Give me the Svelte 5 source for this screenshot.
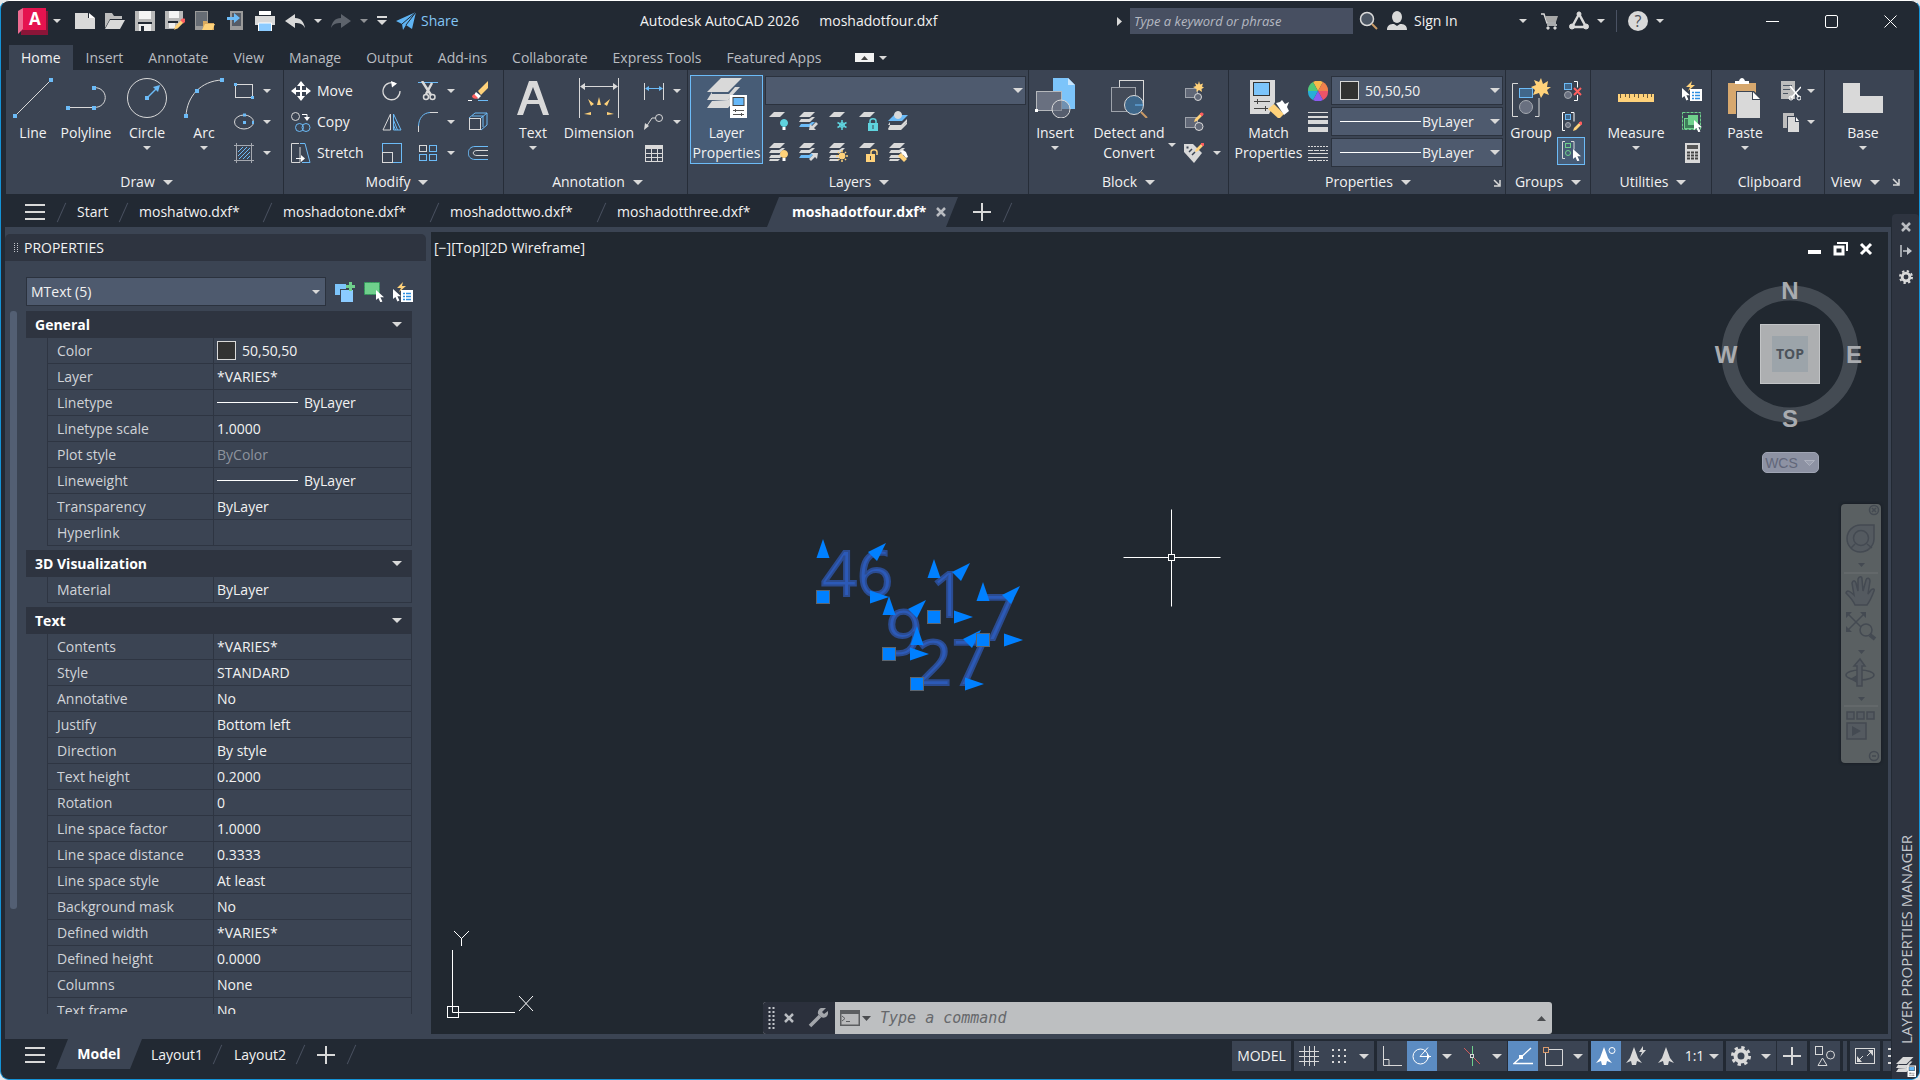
<script>
  const G = '#d9d9d9', B = '#6cbbf7', Y = '#ffd27a', R = '#ff5f5f', W = '#ffffff', D = '#3b4453', T = '#5fd3de', N = '#6fd08c';

  const line = (d, c = G, w = 1) => `<path d="${d}" fill="none" stroke="${c}" stroke-width="${w}"/>`;
  const fill = (d, c = G) => `<path d="${d}" fill="${c}"/>`;
  const box = (x, y, w, h, c) => `<rect x="${x}" y="${y}" width="${w}" height="${h}" fill="${c}"/>`;
  const frame = (x, y, w, h, c, f = 'none') => `<rect x="${x}" y="${y}" width="${w}" height="${h}" fill="${f}" stroke="${c}"/>`;
  const ring = (x, y, r, c, f = 'none', w = 1) => `<circle cx="${x}" cy="${y}" r="${r}" fill="${f}" stroke="${c}" stroke-width="${w}"/>`;
  const cursor = (x, y) => `<path transform="translate(${x} ${y})" d="M0 0v10l2.4-2 2 4.4 2-1-2-4.2H8z" fill="#fff"/>`;
  const pencil = (x, y) => `<g transform="translate(${x} ${y})"><path d="M0 9l1-3 5-5 2 2-5 5z" fill="${Y}"/><path d="M6 1l1-1h1.5l.7 1L8.500 2.500 8 3z" fill="${R}" stroke="${R}"/></g>`;
  const sheet = (y, c = G) => `<path d="M6 ${y}h11l-5 5H1z" fill="${c}"/>`;
  const stripes = (c = G) => sheet(1) + fill('M3 8l-2 3h11l5-5h-3l-3 2z') + fill('M3 13l-2 3h11l5-5h-3l-3 2z', c) + (c === G ? fill('M2 17l-1 2h9l2-2z') : '');

  const icons = {
    logo: [30, 27, fill('M3 3h27v24H3z', '#8b1538') + fill('M0 3l5-3v21l-5 5z', '#ee6c92') + fill('M5 0h23v22H5z', '#e5134f')],
    doc: [20, 20, fill('M0 2h13v5h7v11H0z') + fill('M14 2l6 5h-6z', W)],
    open: [20, 20, fill('M0 2h7l2 3h8v3H5L0 17z', '#bdbdbd') + fill('M5 9h15l-5 9H0z')],
    save: [20, 20, fill('M0 0h20v20H0z', '#b9b9b9') + box(4, 0, 12, 8, '#f4f4f4') + box(3, 11, 14, 2, '#222933') + box(4, 13, 12, 7, '#efefef') + box(6, 15, 3, 5, '#222933')],
    saveas: [20, 20, fill('M0 0h18v9l-9 9H0z', '#b9b9b9') + box(4, 0, 10, 7, '#f4f4f4') + box(3, 10, 10, 2, '#222933') + box(4, 12, 6, 5, '#efefef') + `<g transform="translate(9 8) scale(1.200)">${pencil(0, 0)}</g>`],
    webopen: [20, 20, fill('M0 0h13v19H0z', '#9a9a9a') + box(1, 1, 11, 14, '#666c74') + fill('M8 10h4l1 2h6v7H8z', '#d9a95f') + fill('M10 13h10l-3 6H7z', Y)],
    websave: [20, 20, fill('M5 0h13v19H5z', '#9a9a9a') + box(7, 2, 9, 13, '#565c66') + fill('M2 6h7V2l6 5-6 5V9H2z', B)],
    print: [20, 20, box(4, 0, 12, 4, W) + fill('M0 5h20v9H0z') + box(4, 12, 12, 8, '#8bcbff') + line('M3.500 20v-8h13v8', W)],
    undo: [20, 14, fill('M0 7l10-7v4c6 0 9 4 10 10-2-4-5-5-10-5v5z')],
    redo: [20, 14, fill('M20 7L10 0v4C4 4 1 8 0 14c2-4 5-5 10-5v5z', '#5d636c')],
    quick: [10, 10, box(0, 0, 10, 2, G) + fill('M0 4h10l-5 5z')],
    plane: [20, 18, fill('M0 9L20 0l-4 17-6-4-3 5-1-6z', '#5fb4f4') + line('M6 12L20 0 10 13', '#222933')],
    search: [20, 20, ring(8, 8, 6.5, G, '#4b5563', 1.5) + line('M13 13l5 5', '#c99a66', 2)],
    user: [20, 20, `<ellipse cx="10" cy="6" rx="5" ry="6" fill="${G}"/>` + fill('M0 19c0-5 3-6 7-6l3 2 3-2c4 0 7 1 7 6z')],
    cart: [17, 17, line('M0 1h3l3 9h9', G, 1.5) + fill('M4 3h13l-2 6H6z', '#a8a8a8') + line('M6 12h10', G, 1.5) + ring(7, 15, 1.2, G, G) + ring(14, 15, 1.2, G, G)],
    share3: [20, 20, line('M10 3L3 16h14z', G, 2.5) + ring(10, 3, 2, G, G) + ring(3, 15.5, 2.5, G, G) + ring(17, 15.5, 2.5, G, G)],
    min: [13, 13, line('M0 6.500h13', W)],
    max: [13, 13, `<rect x=".5" y=".5" width="12" height="12" rx="1.500" fill="none" stroke="${W}"/>`],
    close: [13, 13, line('M.5.500l12 12M12.500.500l-12 12', W)],
    line: [40, 40, line('M2 38L38 2') + box(0, 36, 4, 4, B) + box(36, 0, 4, 4, B)],
    polyline: [40, 40, line('M1 29.500h27c15 0 15-20 0-20') + box(0, 28, 4, 4, B) + box(26, 28, 4, 4, B) + box(26, 8, 4, 4, B)],
    circle: [40, 40, ring(20, 20, 19.5, G) + box(18, 18, 4, 4, B) + line('M20 20l10-10', B, 1.5) + fill('M33 7l-2 7-5-5z', B)],
    arc: [40, 40, line('M2 38C3 18 17 3 38 2') + box(0, 36, 4, 4, B) + box(11, 11, 4, 4, B) + box(36, 0, 4, 4, B)],
    rect: [20, 20, frame(1.5, 3.5, 17, 13, G) + box(0, 2, 3, 3, B) + box(17, 15, 3, 3, B)],
    ellipse: [20, 20, `<ellipse cx="10" cy="10" rx="9.500" ry="7" fill="none" stroke="${G}"/>` + box(9, 1.5, 3, 3, B) + box(9, 9, 3, 3, B) + box(18, 9, 2, 3, B)],
    hatch: [20, 20, line('M0 2.500h20M0 17.500h20M2.500 0v20M17.500 0v20', '#a5a9b0') + line('M4 9l5-5M4 13l9-9M5 16L16 5M9 16l7-7M13 16l3-3', B)],
    move: [20, 20, line('M10 2v16M2 10h16', W, 2) + fill('M10 0l4 5H6zM10 20l4-5H6zM0 10l5-4v8zM20 10l-5-4v8z', W)],
    copy: [20, 20, ring(4.5, 4.5, 4, G) + ring(8.5, 15.5, 4, B) + ring(15, 15.5, 4, B) + line('M11 2.500h5v3', W) + fill('M13 5h6l-3 4z', W)],
    stretch: [20, 20, line('M8 .5H.5v19H9V4', G) + line('M9 .5h5l5 19H11', B) + line('M5 15.500h6', W) + fill('M10 12l4 3.500-4 3.500z', W)],
    rotate: [20, 20, line('M14 3a8.500 8.500 0 1 0 4 7', G, 1.3) + fill('M9 0l6 2.500-5 4z', W)],
    mirror: [20, 20, line('M8.500 2v16H1z', G) + line('M11.500 2v16H19z', B) + line('M11.500 8l4 10M11.500 13l2 5', B)],
    scale: [20, 20, frame(.5, .5, 19, 19, B) + frame(.5, 9.5, 10, 10, G, D)],
    trim: [20, 20, line('M0 1.500h20', B) + line('M4 0l9 14M14 2l-6 11', G, 2.5) + ring(8, 16, 2.5, G, 'none', 1.5) + ring(14.5, 16, 2.5, G, 'none', 1.5)],
    fillet: [20, 20, line('M.5 20v-7', G) + line('M.5 14C1 6 5 1 12 .5', B) + line('M12 .5h8', G)],
    array: [20, 20, frame(1.5, 2.5, 7, 6, G) + frame(11.5, 2.5, 7, 6, B) + frame(1.5, 11.5, 7, 6, B) + frame(11.5, 11.5, 7, 6, B)],
    erase: [20, 20, fill('M10 10L20 0v7l-7 7z', Y) + fill('M8 11l5 4-3 3-4-4z', W) + fill('M6 13l4 4c-3 2-6 0-6-2z', R) + line('M0 19.500h4', W) + line('M10 19.500h10', B)],
    explode: [20, 20, line('M1 6l6-5h12v12l-6 5M13 6l6-5', B) + frame(1.5, 6.5, 11, 11, G) + line('M4 4h11v11', B)],
    offset: [20, 20, line('M20 3.500H7C-2 3.500-2 16.500 7 16.500h13', B) + line('M20 7.500H9c-5 0-5 5 0 5h11', G)],
    text: [32, 40, fill('M12 3h8l12 34h-6l-4-11H10L6 37H0zM16 9l-5 13h10z')],
    dim: [40, 40, line('M.5 0v40M39.500 0v40M3 8.500h34', G) + fill('M1 8.500l5-3.500v7zM39 8.500l-5-3.500v7z') + fill('M18 27h4l-2-8zM12 28l3-2-6-5zM28 28l-3-2 6-5zM12 34v3l-7-1zM28 34v3l7-1z', Y)],
    dimlin: [20, 20, line('M.5 2v17M19.500 2v17', G) + line('M3 7.500h14', B) + fill('M1 7.500l4-2.500v5zM19 7.500L15 5v5z', B)],
    leader: [20, 20, ring(15, 6, 3.5, G) + line('M11 6H8L2 15', G) + fill('M0 18l1-7 4 3z')],
    table: [20, 20, frame(1.5, 2.5, 17, 16, G) + box(1, 3, 18, 3, G) + line('M1 10.500h18M1 14.500h18M7.500 6v12M13.500 6v12')],
    layerprops: [40, 40, fill('M14 0h21L21 14H0z') + fill('M5 14L0 22h21l12-13h-5l-6 7H5z') + fill('M5 23l-5 7h21l9-10v-2h-6l-3 4z') + box(23, 17, 17, 23, W) + box(25.5, 19, 12, 9, '#444') + box(26.5, 20, 10, 7, '#66b8f8') + line('M26 32.500h11M26 36.500h11', '#555') + line('M28.500 31v3M34.500 35v3', '#555')],
    loff: [20, 20, sheet(1) + ring(16, 12, 3.5, T, T) + box(14.5, 16, 3, 3, W)],
    liso: [20, 20, stripes(B) + fill('M11 19l1-6 2 2 4-4 2 2-4 4 2 2z')],
    lfreeze: [20, 20, sheet(1) + line('M14 9v10M9.500 11.500l9 5M18.500 11.500l-9 5', T, 1.5) + ring(14, 14, 2.5, T)],
    llock: [20, 20, sheet(1) + line('M12 12v-2c0-3 6-3 6 0v2', T, 1.5) + box(10, 12, 10, 8, T) + box(14.5, 14, 1, 4, D)],
    lcur: [20, 20, fill('M6 4h14l-6 6H0z', B) + fill('M2 11l-2 3h13l6-6v3l-6 7H0l2-4z') + fill('M2 16l-2 3h13l6-6v-2l-6 6z') + ring(10, 4, 3.5, G, G)],
    lon: [20, 20, stripes() + ring(16, 12, 3.5, Y, Y) + box(14.5, 16, 3, 3, W)],
    luniso: [20, 20, stripes(B) + fill('M20 11l-1 6-2-2-4 4-2-2 4-4-2-2z')],
    lthaw: [20, 20, stripes() + ring(14, 14, 3, Y, Y) + line('M14 8v2M14 18v2M8 14h2M18 14h2M10 10l1 1M18 10l-1 1M10 18l1-1M18 18l-1-1', Y, 1.5)],
    lunlock: [20, 20, sheet(1) + line('M13 12v-2c0-3 6-3 6 0v3', Y, 1.5) + box(8, 12, 9, 8, Y) + box(12, 14, 1, 4, D)],
    lmatch: [20, 20, stripes() + fill('M10 14l3-3 6 6-3 3z', Y) + fill('M12 9l3-1 3 2 2 5-2 1z', W)],
    insert: [40, 40, fill('M18 0h15l7 7v24H18z', '#7cc4fa') + fill('M33 0v7h7z', '#c8e6fd') + frame(1.5, 13.5, 25, 19, '#b5b8bc', '#697080') + ring(26, 31, 9, G, '#69708099') + box(0, 31, 3, 3, W)],
    detect: [40, 40, frame(10.5, 2.5, 24, 24, G) + frame(2.5, 9.5, 24, 24, '#9ea3ab', '#444b58') + ring(25, 27, 9.5, G, '#3e678a') + line('M32 34l6 6', '#c99a66', 2) + line('M26 27h8', B)],
    binsert: [20, 20, frame(1.5, 7.5, 12, 9, '#9ea3ab', '#606776') + ring(14, 16, 3.5, G, '#606776') + `<path d="M15 0l1 3.500 3-1-1 3 2 1-2.500 1.500.500 3-3-2-2.500 2v-3L9 6l3-1-1-3 3 1.500z" fill="${Y}"/>`],
    bedit: [20, 20, frame(1.5, 5.5, 12, 10, '#9ea3ab', '#606776') + ring(15, 14.5, 4, G, '#606776') + pencil(10, 1)],
    battr: [20, 20, fill('M0 1h9l9 9-8 10L0 9z') + box(2.5, 3.5, 2, 2, D) + line('M5 9l3-3M8 12l3-3', D, 1.5) + pencil(11, 0)],
    match: [40, 40, fill('M1 2h25v22L20 36H1z') + frame(4.5, 4.5, 16, 13, '#333', '#7cc4fa') + line('M5 23.500h16M5 30.500h14M8.500 21v5M16.500 28v5', '#444') + fill('M19 31l6-5 10 10-5 5z', Y) + fill('M27 25l4-1 2-2 3 4 4-2-2 5 2 4-5 4z', W)],
    wheel: [20, 20, fill('M10 10L5 1a10 10 0 0 1 10 0z', '#f8b94b') + fill('M10 10l5-9a10 10 0 0 1 5 9z', '#f0814c') + fill('M10 10h10a10 10 0 0 1-5 9z', '#ed5468') + fill('M10 10l5 9a10 10 0 0 1-10 0z', '#8b5cf0') + fill('M10 10l-5 9a10 10 0 0 1-5-9z', '#27aed8') + fill('M10 10H0a10 10 0 0 1 5-9z', '#52c878')],
    weights: [20, 20, box(0, 0, 20, 1, G) + box(0, 4, 20, 2, G) + box(0, 8, 20, 4, G) + box(0, 15, 20, 5, G)],
    types: [20, 20, `<path d="M0 3.500h20" stroke="${G}" stroke-dasharray="2 1"/><path d="M0 7.500h20" stroke="${G}" stroke-dasharray="5 1"/><path d="M0 10.500h20M0 14.500h20" stroke="${G}"/><path d="M0 17.500h20" stroke="${G}" stroke-dasharray="5 1 2 1"/>`],
    group: [40, 40, line('M7 5.500H1.500v33H7M24 38.500h4V20', G) + frame(8.5, 10.5, 13, 9, B, '#41678a') + ring(15, 29, 6.5, '#a5a9b0', '#697080') + `<path d="M30 0l2 6 5-3-1 6h4l-4 3 2 5-5-2-3 5-2-5-6 2 2-5-4-3 5-2-2-5 5 2z" fill="${Y}"/>`],
    ungroup: [20, 20, frame(2.5, 2.5, 7, 6, B, '#41678a') + ring(6, 14, 3.5, '#a5a9b0', '#697080') + line('M12 .5h3.500v6M12 19.500h3.500V14', W) + line('M12 7l7 7M19 7l-7 7', R, 2)],
    gedit: [20, 20, line('M3 .5H.5v18H3M9 .5h3v9', W) + frame(3.5, 2.5, 5, 5, B, '#41678a') + ring(6, 13, 2.5, '#a5a9b0', '#697080') + pencil(11, 10)],
    gsel: [20, 20, line('M4 .5H1.500v17H4M10 .5h3v8', G) + frame(4.5, 2.5, 5, 4, N) + ring(7, 12, 2.5, N) + cursor(12, 8)],
    ruler: [40, 40, box(2, 16, 36, 8, Y) + line('M4.500 16v4M9.500 16v3M13.500 16v4M18.500 16v3M22.500 16v4M27.500 16v3M31.500 16v4M35.500 16v3', '#6b5a3a')],
    qselect: [20, 20, cursor(0, 7) + fill('M10 0L4 6h4L6 10l7-6H9z', Y) + box(8, 8, 12, 12, W) + line('M10 11.500h2M10 14.500h2M10 17.500h2M13 11.500h5M13 14.500h5M13 17.500h5', '#2f8fe0', 1.5)],
    selall: [20, 20, `<rect x=".5" y=".5" width="18" height="17" fill="none" stroke="${N}" stroke-dasharray="3 1"/>` + frame(2.5, 6.5, 10, 10, N, '#3c7d58') + box(6, 3, 10, 10, N) + cursor(12, 8)],
    calc: [20, 20, box(3, 0, 15, 20, G) + box(5, 2, 11, 4, '#555') + line('M5 9.500h3M9 9.500h3M13 9.500h3M5 12.500h3M9 12.500h3M13 12.500h3M5 15.500h3M9 15.500h3M13 15.500h3', '#444', 2)],
    paste: [34, 40, fill('M0 5h28v31H0z', '#d7a86e') + fill('M7 6V3h4c1-4 5-4 6 0h4v3z', W) + fill('M8 13h18l8 8v19H8z', D) + fill('M9 14h15v8h8v18H9z') + fill('M25 14l7 7h-7z', W)],
    cut: [20, 20, box(0, 0, 14, 18, '#bdbdbd') + line('M2 4.500h9M2 8.500h7M2 12.500h5', '#4b5563') + line('M9 5l9 11M20 6L10 17', W, 1.5) + ring(10, 17, 2, W) + ring(18, 17, 2, W)],
    copyclip: [20, 20, fill('M2 1h11v15H2z', '#bdbdbd') + fill('M6 4h9l5 5v12H6z', D) + fill('M7 5h7v5h4v10H7z') + fill('M15 5l3 4h-3z', W)],
    base: [40, 40, fill('M0 5h17v13h23v17H0z')],
    launch: [8, 8, line('M1 1l5 5M7 1v6H1', G, 1.5)],
    menu: [20, 18, box(0, 1, 20, 2, G) + box(0, 8, 20, 2, G) + box(0, 15, 20, 2, G)],
    plus: [18, 18, box(0, 8, 18, 2, G) + box(8, 0, 2, 18, G)],
    x: [10, 10, line('M1 1l8 8M9 1L1 9', '#b9bcc1', 2.5)],
    addsel: [20, 20, box(0, 2, 11, 11, '#7cc4fa') + box(5, 7, 13, 13, D) + box(6, 8, 12, 12, '#8bcbff') + box(14, 0, 3, 9, N) + box(11, 3, 9, 3, N)],
    pick: [20, 20, `<rect x=".5" y=".5" width="15" height="12" fill="${N}" stroke="#2d9d59" stroke-dasharray="2 1"/>` + cursor(12, 8)],
    pin: [12, 12, line('M1 0v12M3 6h6', '#c4c7cc', 1.5) + fill('M7 2l5 4-5 4z', '#c4c7cc')],
    gear: [20, 20, `<circle cx="10" cy="10" r="5.500" fill="none" stroke="${G}" stroke-width="4"/>` + `<circle cx="10" cy="10" r="8.500" fill="none" stroke="${G}" stroke-width="3" stroke-dasharray="3.300 3.380"/>`],
    grid: [20, 20, line('M5.500 0v20M10.500 0v20M15.500 0v20M0 5.500h20M0 10.500h20M0 15.500h20')],
    dots: [20, 20, [3, 9, 15].map((x) => [3, 9, 15].map((y) => box(x, y, 2, 2, G)).join('')).join('')],
    ortho: [20, 20, line('M1.500 0v19.500H20', G) + line('M2 13.500h5V19', G)],
    polar: [20, 20, ring(8.5, 10.5, 7.5, W) + line('M8 10.500h11M8 10.500l8-9', W) + fill('M15 7v7l3-3.500z', W)],
    iso: [20, 20, line('M2 2l16 16', '#d05a5a') + line('M10.500 0v20', N) + frame(8.5, 8.5, 3, 3, G, D)],
    otrack: [20, 20, line('M18 2L1 17.500h19', W, 1.3) + box(6, 9, 4, 4, W)],
    osnap: [20, 20, line('M6 3.500h13.500v16h-17V7', G) + frame(.5, 1.5, 5, 5, '#d99a6c')],
    ann1: [20, 20, fill('M8 1l4 11 4 5-5-2-1 4H6l-1-4-5 2 4-5z', W) + ring(16, 4.5, 3, W)],
    ann2: [20, 20, fill('M8 1l4 11 4 5-5-2-1 4H6l-1-4-5 2 4-5z') + fill('M17 0l-4 6h3l-2 5 6-7h-3z')],
    ann3: [20, 20, fill('M10 1l4 11 4 5-5-2-1 4H8l-1-4-5 2 4-5z')],
    shapes: [20, 20, frame(.5, .5, 7, 8, G) + ring(15.5, 9, 4, G) + line('M7.500 12L12 19.500H3z')],
    full: [20, 20, frame(.5, 2.5, 19, 15, G) + line('M3 15l5-5M12 10l5-5') + fill('M2 10v6h5zM18 10V4h-5z')],
    ctlmin: [16, 14, box(1, 8, 13, 4, W)],
    ctlres: [16, 14, line('M4 1h10v8', W, 2) + line('M2 5h8v7H2z', W, 3)],
    ctlx: [14, 14, line('M2 2l10 10M12 2L2 12', W, 3)],
    wrench: [20, 20, line('M2 18l10-10', '#a3a6ab', 3.5) + fill('M18 0l-4 4 2 2 4-3c1 5-3 8-7 6l-3-3c-1-4 3-8 8-6z', '#a3a6ab')],
    term: [20, 16, box(0, 0, 20, 16, '#5c5e61') + box(1.5, 4, 17, 10.5, '#b9babc') + line('M2 6l3 2.500-3 2.500M6 11.500h4', '#5c5e61')],
  };

  const tabs = ['Home', 'Insert', 'Annotate', 'View', 'Manage', 'Output', 'Add-ins', 'Collaborate', 'Express Tools', 'Featured Apps'];
  const docs = [['Start', 'start'], ['moshatwo.dxf*', 'short'], ['moshadotone.dxf*', ''], ['moshadottwo.dxf*', ''], ['moshadotthree.dxf*', 'last']];
  const layerTools = ['loff', 'liso', 'lfreeze', 'llock', 'lcur', 'lon', 'luniso', 'lthaw', 'lunlock', 'lmatch'];

  const sections = [
    { title: 'General', rows: [
      ['Color', '50,50,50', 'swatch'], ['Layer', '*VARIES*'], ['Linetype', 'ByLayer', 'rule'], ['Linetype scale', '1.0000'],
      ['Plot style', 'ByColor', 'dim'], ['Lineweight', 'ByLayer', 'rule'], ['Transparency', 'ByLayer'], ['Hyperlink', '']] },
    { title: '3D Visualization', rows: [['Material', 'ByLayer']] },
    { title: 'Text', rows: [
      ['Contents', '*VARIES*'], ['Style', 'STANDARD'], ['Annotative', 'No'], ['Justify', 'Bottom left'], ['Direction', 'By style'],
      ['Text height', '0.2000'], ['Rotation', '0'], ['Line space factor', '1.0000'], ['Line space distance', '0.3333'],
      ['Line space style', 'At least'], ['Background mask', 'No'], ['Defined width', '*VARIES*'], ['Defined height', '0.0000'],
      ['Columns', 'None'], ['Text frame', 'No']] },
  ];

  // Text objects on the canvas: grip origin, end of the width grip, string, string offset.
  const objects = [
    { x: 392, y: 365, w: 47, s: '46', dx: -2, dy: -1 },
    { x: 503, y: 385, w: 20, s: '1', dx: -4, dy: 0 },
    { x: 458, y: 422, w: 21, s: '9', dx: -3, dy: 1 },
    { x: 486, y: 452, w: 48, s: '27', dx: -1, dy: 1 },
    { x: 552, y: 408, w: 21, s: '7', dx: -3, dy: 0 },
  ];
</script>

{#snippet ic(name)}
  <svg class="ic" width={icons[name][0]} height={icons[name][1]} viewBox="0 0 {icons[name][0]} {icons[name][1]}" aria-hidden="true">{@html icons[name][2]}</svg>
{/snippet}

{#snippet caret()}
  <svg class="ic" width="8" height="4" viewBox="0 0 8 4" aria-hidden="true"><path d="M0 0h8L4 4z" fill="#d9d9d9" /></svg>
{/snippet}

{#snippet wide()}
  <svg class="ic" width="10" height="5" viewBox="0 0 10 5" aria-hidden="true"><path d="M0 0h10L5 5z" fill="#d9d9d9" /></svg>
{/snippet}

{#snippet tool(name, label, more)}
  <div class="tool">
    <button aria-label={label}>{@render ic(name)}</button>
    {#if more}<button aria-label="{label} options">{@render caret()}</button>{/if}
  </div>
{/snippet}

{#snippet big(name, lines, more, cls)}
  <button class="big {cls}">
    {@render ic(name)}
    <span class="lbl">{#each lines as l}<span>{l}</span>{/each}</span>
    {#if more}{@render caret()}{/if}
  </button>
{/snippet}

{#snippet foot(label, more)}
  <button class="foot">{label}{#if more}{@render wide()}{/if}</button>
{/snippet}

<div class="app">
  <header class="title">
    <div class="quick">
      <button class="logo" aria-label="Application menu">{@render ic('logo')}<b>A</b></button>
      <button aria-label="Application options">{@render caret()}</button>
      <button class="new" aria-label="New">{@render ic('doc')}</button>
      <button aria-label="Open">{@render ic('open')}</button>
      <button aria-label="Save">{@render ic('save')}</button>
      <button aria-label="Save as">{@render ic('saveas')}</button>
      <button aria-label="Open from web">{@render ic('webopen')}</button>
      <button aria-label="Save to web">{@render ic('websave')}</button>
      <button aria-label="Plot">{@render ic('print')}</button>
      <button aria-label="Undo">{@render ic('undo')}</button>
      <button aria-label="Undo history">{@render caret()}</button>
      <button aria-label="Redo">{@render ic('redo')}</button>
      <button class="faint" aria-label="Redo history">{@render caret()}</button>
      <button aria-label="Customize">{@render ic('quick')}</button>
      <button class="share">{@render ic('plane')}Share</button>
    </div>
    <div class="name"><span>Autodesk AutoCAD 2026</span><span>moshadotfour.dxf</span></div>
    <div class="account">
      <svg width="5" height="9" viewBox="0 0 5 9" aria-hidden="true"><path d="M0 0l5 4.500L0 9z" fill="#d9d9d9" /></svg>
      <input type="search" aria-label="Search" placeholder="Type a keyword or phrase" />
      <button aria-label="Search">{@render ic('search')}</button>
      <button class="sign">{@render ic('user')}Sign In</button>
      <button aria-label="Account options">{@render caret()}</button>
      <button class="cart" aria-label="App store">{@render ic('cart')}</button>
      <button aria-label="Autodesk apps">{@render ic('share3')}</button>
      <button aria-label="App options">{@render caret()}</button>
      <i class="bar"></i>
      <button class="help" aria-label="Help">?</button>
      <button aria-label="Help options">{@render caret()}</button>
    </div>
    <div class="winctl">
      <button aria-label="Minimize">{@render ic('min')}</button>
      <button aria-label="Maximize">{@render ic('max')}</button>
      <button aria-label="Close">{@render ic('close')}</button>
    </div>
  </header>

  <nav class="tabs">
    {#each tabs as t, i}<button class:on={i === 0}>{t}</button>{/each}
    <button class="collapse" aria-label="Minimize ribbon"><svg width="19" height="9" viewBox="0 0 19 9" aria-hidden="true"><path d="M0 0h19v9H0z" fill="#f2f2f2" /><path d="M6 7h7L9.500 3z" fill="#444" /></svg></button>
    <button class="after" aria-label="Ribbon options">{@render caret()}</button>
  </nav>

  <section class="ribbon">
    <div class="panel draw">
      <div class="body">
        {@render big('line', ['Line'], false, 'w46')}
        {@render big('polyline', ['Polyline'], false, 'w60')}
        {@render big('circle', ['Circle'], true, 'w62')}
        {@render big('arc', ['Arc'], true, 'w52')}
        <div class="col">
          {@render tool('rect', 'Rectangle', true)}
          {@render tool('ellipse', 'Ellipse', true)}
          {@render tool('hatch', 'Hatch', true)}
        </div>
      </div>
      {@render foot('Draw', true)}
    </div>

    <div class="panel modify">
      <div class="body">
        <div class="col named">
          <button>{@render ic('move')}Move</button>
          <button>{@render ic('copy')}Copy</button>
          <button>{@render ic('stretch')}Stretch</button>
        </div>
        <div class="col">
          {@render tool('rotate', 'Rotate')}
          {@render tool('mirror', 'Mirror')}
          {@render tool('scale', 'Scale')}
        </div>
        <div class="col">
          {@render tool('trim', 'Trim', true)}
          {@render tool('fillet', 'Fillet', true)}
          {@render tool('array', 'Array', true)}
        </div>
        <div class="col">
          {@render tool('erase', 'Erase')}
          {@render tool('explode', 'Explode')}
          {@render tool('offset', 'Offset')}
        </div>
      </div>
      {@render foot('Modify', true)}
    </div>

    <div class="panel annotation">
      <div class="body">
        {@render big('text', ['Text'], true, 'w50')}
        {@render big('dim', ['Dimension'], false, 'w82')}
        <div class="col">
          {@render tool('dimlin', 'Linear', true)}
          {@render tool('leader', 'Leader', true)}
          {@render tool('table', 'Table')}
        </div>
      </div>
      {@render foot('Annotation', true)}
    </div>

    <div class="panel layers">
      <div class="body">
        {@render big('layerprops', ['Layer', 'Properties'], false, 'active')}
        <div class="stack">
          <div class="combo">
            <select aria-label="Layer"><option></option></select>{@render wide()}
          </div>
          <div class="lgrid">
            {#each layerTools as t}<button aria-label={t}>{@render ic(t)}</button>{/each}
          </div>
        </div>
      </div>
      {@render foot('Layers', true)}
    </div>

    <div class="panel block">
      <div class="body">
        {@render big('insert', ['Insert'], true, 'w52')}
        {@render big('detect', ['Detect and', 'Convert'], true, 'w96 aside')}
        <div class="col">
          {@render tool('binsert', 'Create block')}
          {@render tool('bedit', 'Edit block')}
          {@render tool('battr', 'Edit attributes', true)}
        </div>
      </div>
      {@render foot('Block', true)}
    </div>

    <div class="panel props">
      <div class="body">
        {@render big('match', ['Match', 'Properties'], false, 'w76')}
        <div class="stack">
          <div class="row">{@render ic('wheel')}
            <div class="combo"><i class="sw"></i><select class="c1" aria-label="Object color"><option>50,50,50</option></select>{@render wide()}</div>
          </div>
          <div class="row">{@render ic('weights')}
            <div class="combo"><i class="ln"></i><select class="c2" aria-label="Lineweight"><option>ByLayer</option></select>{@render wide()}</div>
          </div>
          <div class="row">{@render ic('types')}
            <div class="combo"><i class="ln"></i><select class="c2" aria-label="Linetype"><option>ByLayer</option></select>{@render wide()}</div>
          </div>
        </div>
      </div>
      {@render foot('Properties', true)}
      <button class="launch" aria-label="Properties dialog">{@render ic('launch')}</button>
    </div>

    <div class="panel groups">
      <div class="body">
        {@render big('group', ['Group'], false, 'w50')}
        <div class="col tight">
          {@render tool('ungroup', 'Ungroup')}
          {@render tool('gedit', 'Group edit')}
          <div class="tool lit">{@render tool('gsel', 'Group selection')}</div>
        </div>
      </div>
      {@render foot('Groups', true)}
    </div>

    <div class="panel util">
      <div class="body">
        {@render big('ruler', ['Measure'], true, 'w82')}
        <div class="col">
          {@render tool('qselect', 'Quick select')}
          {@render tool('selall', 'Select all')}
          {@render tool('calc', 'Calculator')}
        </div>
      </div>
      {@render foot('Utilities', true)}
    </div>

    <div class="panel clip">
      <div class="body">
        {@render big('paste', ['Paste'], true, 'w60')}
        <div class="col">
          {@render tool('cut', 'Cut', true)}
          {@render tool('copyclip', 'Copy clip', true)}
        </div>
      </div>
      {@render foot('Clipboard', false)}
    </div>

    <div class="panel view">
      <div class="body">
        {@render big('base', ['Base'], true, 'w76')}
      </div>
      <div class="feet">
        {@render foot('View', true)}
        <button aria-label="View dialog">{@render ic('launch')}</button>
      </div>
    </div>
  </section>

  <div class="lower">
    <div class="left">
      <nav class="docs">
        <button class="burger" aria-label="Document menu">{@render ic('menu')}</button>
        {#each docs as [name, cls]}<button class="doc {cls}"><i class="slash"></i>{name}</button>{/each}
        <div class="doc current"><button>moshadotfour.dxf*</button><button aria-label="Close tab">{@render ic('x')}</button></div>
        <button class="add" aria-label="New tab">{@render ic('plus')}</button>
        <i class="slash"></i>
      </nav>

      <div class="work">
        <aside class="palette">
          <h2><svg width="4" height="10" viewBox="0 0 4 10" aria-hidden="true"><path d="M.5 0v10M3.500 0v10" stroke="#c4c7cc" stroke-dasharray="1 1" /></svg>PROPERTIES</h2>
          <div class="picker">
            <div class="combo"><select aria-label="Selection"><option>MText (5)</option></select>{@render caret()}</div>
            <button aria-label="Toggle pickadd">{@render ic('addsel')}</button>
            <button aria-label="Select objects">{@render ic('pick')}</button>
            <button aria-label="Quick select">{@render ic('qselect')}</button>
          </div>
          <div class="scroller">
            <div class="thumb"></div>
            <div class="sections">
              {#each sections as s}
                <section>
                  <h3>{s.title}{@render wide()}</h3>
                  <table>
                    <tbody>
                      {#each s.rows as [k, v, kind]}
                        <tr>
                          <th scope="row">{k}</th>
                          <td><div class="val" class:dim={kind === 'dim'}>{#if kind === 'swatch'}<i class="sw"></i>{/if}{#if kind === 'rule'}<i class="ln"></i>{/if}{v}</div></td>
                        </tr>
                      {/each}
                    </tbody>
                  </table>
                </section>
              {/each}
            </div>
          </div>
        </aside>

        <main class="canvas">
          <svg class="drawing" aria-hidden="true">
            {#each objects as o}
              <text class="digits" x={o.x + o.dx} y={o.y + o.dy}>{o.s}</text>
            {/each}
            {#each objects as o}
              <g transform="translate({o.x} {o.y})" fill="#0080ff">
                <rect x="-6.500" y="-6.500" width="13" height="13" stroke="#5d6670" />
                <path d="M0-58l6.500 19h-13z" />
                <path d="M{o.w}-6.500l19 6.500-19 6.500z" />
                <path d="M{o.w + 16}-54l-18 9 9 9z" />
              </g>
            {/each}
            <path d="M692.500 325.500h97M740.500 277.500v97" stroke="#fff" />
            <rect x="737.500" y="322.500" width="6" height="6" fill="#212830" stroke="#fff" />
            <g fill="none" stroke="#fff">
              <path d="M21.500 718v62.500H84" />
              <rect x="16.500" y="774.500" width="11" height="11" />
              <path d="M23 699l7.500 7.500L38 699M30.500 706v8M88 764l14 15M102 764l-14 15" />
            </g>
          </svg>
          <div class="viewlabel">[−][Top][2D Wireframe]</div>
          <div class="viewctl">
            <button aria-label="Minimize view">{@render ic('ctlmin')}</button>
            <button aria-label="Restore view">{@render ic('ctlres')}</button>
            <button aria-label="Close view">{@render ic('ctlx')}</button>
          </div>
          <div class="cube">
            <svg width="150" height="150" viewBox="0 0 150 150" aria-hidden="true">
              <circle cx="75" cy="75" r="61" fill="none" stroke="#444b53" stroke-width="15" />
              <rect x="45.500" y="45.500" width="59" height="59" fill="#adafb1" stroke="#c2c4c6" />
              <rect x="57" y="57" width="36" height="36" fill="#9ca4aa" />
              <g class="compass" text-anchor="middle">
                <text x="75" y="20">N</text><text x="75" y="148">S</text><text x="11" y="84">W</text><text x="139" y="84">E</text>
              </g>
              <text class="top" x="75" y="80" text-anchor="middle">TOP</text>
            </svg>
            <button class="wcs">WCS<svg width="11" height="6" viewBox="0 0 11 6" aria-hidden="true"><path d="M.5.500h10L5.500 5.500z" fill="#999eae" stroke="#adb1be" /></svg></button>
          </div>
          <div class="navbar">
            <svg width="40" height="259" viewBox="0 0 40 259" aria-hidden="true">
              <g fill="none" stroke="#444a52" stroke-width="1.500">
                <circle cx="33" cy="6" r="4.500" /><path d="M31 4l4 4M35 4l-4 4" />
                <path d="M20 21h13v14a13.500 13.500 0 1 1-13-14z" fill="#545a60" /><circle cx="20" cy="34" r="7.500" /><path d="M14 40l-4 4M26 40l5 4" />
                <path d="M3 69h34M3 202h34" stroke="#6c7173" stroke-width="1" />
                <path d="M14 101c-2-5-6-9-9-12 1-4 5-1 8 2l-2-12c1-3 3-3 4 0l2 8V75c1-3 4-3 4 0l1 12 3-11c1-3 4-2 4 1l-2 13 3-4c2-2 4-1 3 1-3 8-4 10-7 14z" fill="#545a60" />
                <path d="M7 110l16 16M23 110L7 126" /><circle cx="25" cy="126" r="6" fill="#5a6062" /><path d="M29 131l5 4" stroke-width="4" />
                <ellipse cx="19" cy="171" rx="14" ry="5" /><path d="M19 155l5 7h-3v20h-5v-20h-3z" fill="#545a60" />
                <path d="M6 208h7v7H6zM16 208h7v7h-7zM26 208h7v7h-7zM6 219h19v16H6z" fill="#545a60" />
                <circle cx="33" cy="252" r="4.500" /><path d="M31 252h4" />
              </g>
              <path d="M17 59h7l-3.500 4zM17 146h7l-3.500 4zM17 193h7l-3.500 4zM11 222v10l9-5zM5 108h6l-6 6zM25 108h-6l6 6zM5 128h6l-6-6zM9 175l7-4v8z" fill="#444a52" />
            </svg>
          </div>
          <div class="command">
            <div class="grab">
              <svg width="8" height="22" viewBox="0 0 8 22" aria-hidden="true"><path d="M1.500 0v22M5.500 0v22" stroke="#c4c7cc" stroke-width="2" stroke-dasharray="2 2" /></svg>
              <button aria-label="Close command line">{@render ic('x')}</button>
              <button aria-label="Customize command line">{@render ic('wrench')}</button>
            </div>
            <button class="recent" aria-label="Recent commands">{@render ic('term')}<svg width="9" height="5" viewBox="0 0 9 5" aria-hidden="true"><path d="M0 0h9L4.500 5z" fill="#4b4d50" /></svg></button>
            <input aria-label="Command" placeholder="Type a command" />
            <button class="history" aria-label="Command history"><svg width="9" height="5" viewBox="0 0 9 5" aria-hidden="true"><path d="M0 5h9L4.500 0z" fill="#4b4d50" /></svg></button>
          </div>
        </main>
      </div>

      <footer class="status">
        <button class="burger" aria-label="Layout menu">{@render ic('menu')}</button>
        <button class="model">Model</button>
        <button class="layout">Layout1</button><i class="slash"></i>
        <button class="layout two">Layout2</button><i class="slash"></i>
        <button class="add" aria-label="New layout">{@render ic('plus')}</button><i class="slash"></i>
        <div class="cells">
          <div class="cell"><button class="mode">MODEL</button></div>
          <div class="cell"><button aria-label="Grid">{@render ic('grid')}</button><button aria-label="Snap">{@render ic('dots')}</button><button class="c" aria-label="Snap options">{@render wide()}</button></div>
          <div class="cell"><button aria-label="Ortho">{@render ic('ortho')}</button><button class="on" aria-label="Polar">{@render ic('polar')}</button><button class="c" aria-label="Polar options">{@render wide()}</button><button aria-label="Isodraft">{@render ic('iso')}</button><button class="c edge" aria-label="Isodraft options">{@render wide()}</button><button class="on" aria-label="Object tracking">{@render ic('otrack')}</button><button aria-label="Object snap">{@render ic('osnap')}</button><button class="c" aria-label="Object snap options">{@render wide()}</button></div>
          <div class="cell"><button class="on" aria-label="Annotation visibility">{@render ic('ann1')}</button><button aria-label="Auto scale">{@render ic('ann2')}</button><button aria-label="Annotation scale">{@render ic('ann3')}</button><button class="ratio">1:1{@render wide()}</button></div>
          <div class="cell"><button aria-label="Workspace">{@render ic('gear')}</button><button class="c edge" aria-label="Workspace options">{@render wide()}</button><button aria-label="Monitor">{@render ic('plus')}</button></div>
          <div class="cell"><button aria-label="Isolate">{@render ic('shapes')}</button></div>
          <div class="cell sliver"></div>
          <div class="cell"><button aria-label="Clean screen">{@render ic('full')}</button></div>
          <div class="cell cutoff"><button aria-label="Customization">{@render ic('menu')}</button></div>
        </div>
      </footer>
    </div>

    <aside class="dock">
      <button aria-label="Close palette">{@render ic('x')}</button>
      <button aria-label="Auto-hide">{@render ic('pin')}</button>
      <button class="small" aria-label="Palette properties">{@render ic('gear')}</button>
      <span class="vert">LAYER PROPERTIES MANAGER</span>
      <button class="lp" aria-label="Layer properties manager">{@render ic('layerprops')}</button>
    </aside>
  </div>
</div>

<style>
  :global(body) { margin: 0; background: #e6e8ea; }
  .app {
    box-sizing: border-box; height: 100vh; display: flex; flex-direction: column; overflow: hidden;
    background: #222933; color: #f2f2f2; border: 1px solid #1492d6; border-top-color: #fff; border-radius: 9px;
    font: 14px/20px "Open Sans", "Noto Sans", sans-serif;
  }
  button { background: none; border: 0; padding: 0; font: inherit; color: inherit; display: flex; align-items: center; white-space: nowrap; flex: none; }
  svg { display: block; flex: none; }
  i { display: block; flex: none; }

  .title { height: 44px; flex: none; display: flex; align-items: flex-start; box-sizing: border-box; padding: 7px 22px 0 17px; }
  .title > div { height: 26px; display: flex; align-items: center; }
  .quick { gap: 10px; width: 622px; }
  .quick > button:nth-child(n+11) { margin-left: -1px; }
  .logo { position: relative; }
  .quick > .logo { margin-right: -5px; }
  .logo b { position: absolute; left: 11px; top: 0; font: 700 17px/21px "Open Sans", sans-serif; color: #fff; }
  .new { margin-left: 4px; }
  .faint { opacity: .6; }
  .share { gap: 5px; color: #83c5f5; }
  .name { gap: 20px; flex: 1; }
  .account { gap: 8px; }
  .account input { box-sizing: border-box; width: 223px; height: 26px; margin-right: -2px; padding: 0 4px; border: 0; background: #474f61; color: #fff; font: italic 13px/20px "Open Sans", sans-serif; }
  .account input::placeholder { color: #b5b9c2; opacity: 1; }
  .sign { gap: 7px; width: 124px; }
  .cart { margin-left: 6px; margin-right: 3px; }
  .bar { width: 1px; height: 22px; background: #4a5263; margin: 0 3px; }
  .help { width: 20px; height: 20px; border-radius: 50%; background: #d9d9d9; color: #4b4f57; justify-content: center; font-size: 16px; }
  .winctl { gap: 46px; margin-left: 102px; }

  .tabs { height: 25px; flex: none; display: flex; gap: 1px; padding-left: 8px; color: #b9bcc1; }
  .tabs button { padding: 0 12px; }
  .tabs .on { background: #3b4453; color: #f2f2f2; }
  .tabs .collapse { padding: 0 0 0 21px; }
  .tabs .after { padding: 0 4px; }

  .ribbon { flex: none; height: 124px; display: flex; background: #3b4453; margin: 0 5px; }
  .panel { position: relative; box-sizing: border-box; display: flex; flex-direction: column; border-right: 1px solid #262d38; flex: none; }
  .panel:last-child { border: 0; flex: 1; }
  .body { height: 102px; display: flex; }
  .draw { width: 278px; padding-left: 4px; }
  .modify { width: 220px; padding-left: 7px; }
  .annotation { width: 184px; padding-left: 4px; }
  .layers { width: 341px; padding-left: 2px; }
  .block { width: 200px; }
  .props { width: 277px; padding-left: 2px; }
  .groups { width: 85px; }
  .util { width: 121px; padding-left: 4px; }
  .clip { width: 113px; padding-left: 3px; }
  .foot { height: 20px; gap: 8px; justify-content: center; width: 100%; }
  .feet { display: flex; align-items: center; padding: 0 16px 0 6px; gap: 12px; }
  .feet .foot { width: auto; }
  .launch { position: absolute; right: 4px; bottom: 7px; }
  .big { flex-direction: column; padding-top: 8px; justify-content: flex-start; box-sizing: border-box; }
  .lbl { display: flex; flex-direction: column; align-items: center; margin: 5px 0 3px; }
  .w46 { width: 46px; } .w50 { width: 50px; } .w52 { width: 52px; } .w60 { width: 60px; }
  .w62 { width: 62px; } .w76 { width: 76px; } .w82 { width: 82px; } .w96 { width: 96px; }
  .active { width: 73px; height: 89px; margin-top: 5px; padding-top: 2px; border: 1px solid #6cbbf7; background: #475c76; }
  .props .w76 { width: 75px; }
  .aside { position: relative; }
  .aside > :global(svg:last-child) { position: absolute; right: 1px; top: 73px; }
  .col { padding: 5px 4px 0; display: grid; grid-auto-rows: 31px; align-content: start; }
  .tool { display: flex; align-items: center; gap: 9px; }
  .named { width: 80px; padding-left: 0; }
  .named button { gap: 6px; }
  .modify .col:nth-child(3) { padding-left: 12px; padding-right: 9px; }
  .modify .col:nth-child(2) { padding-left: 7px; }
  .tight { padding-left: 6px; padding-right: 0; }
  .lit { box-sizing: border-box; width: 28px; height: 28px; justify-content: center; align-self: start; margin-left: -5px; border: 1px solid #6cbbf7; background: #475c76; }
  .block .col { padding-left: 7px; }
  .util .col { padding-left: 5px; }
  .clip .col { padding-left: 6px; }
  .clip .tool { gap: 6px; }

  .stack { flex: 1; padding: 6px 2px 0; }
  .combo { position: relative; display: flex; align-items: center; box-sizing: border-box; height: 29px; flex: 1; border: 1px solid #2b323e; background: #4e5a6e; }
  .combo select { appearance: none; width: 100%; height: 100%; border: 0; background: none; color: inherit; font: inherit; padding: 0 0 0 4px; }
  .combo > :global(svg) { position: absolute; right: 2px; pointer-events: none; }
  .picker .combo > :global(svg) { right: 5px; }
  .combo .c1 { padding-left: 33px; }
  .combo .c2 { padding-left: 90px; }
  .combo i { position: absolute; left: 8px; pointer-events: none; }
  .sw { box-sizing: border-box; width: 19px; height: 19px; border: 1px solid #d9d9d9; background: #323232; }
  .ln { width: 81px; height: 1px; background: #fff; }
  .lgrid { display: grid; grid-template-columns: repeat(5, 30px); grid-auto-rows: 31px; padding-left: 3px; }
  .row { display: flex; align-items: center; gap: 3px; height: 31px; }
  .props .stack { padding: 5px 2px 0; }

  .lower { flex: 1; min-height: 0; display: flex; }
  .left { flex: 1; min-width: 0; display: flex; flex-direction: column; padding-right: 1px; }
  .docs { height: 33px; flex: none; display: flex; align-items: center; padding: 3px 0 0 4px; box-sizing: border-box; }
  .burger { width: 56px; padding-left: 20px; box-sizing: border-box; }
  .docs .burger { width: 52px; }
  .slash { width: 1px; height: 21px; margin: 0 4px; background: #4a5160; transform: rotate(24deg); }
  .doc { height: 30px; width: 167px; gap: 15px; }
  .doc .slash { margin: 0 0 0 4px; }
  .start { width: 62px; } .short { width: 144px; } .last { width: 170px; }
  .current { display: flex; align-items: center; box-sizing: border-box; width: 191px; height: 30px; padding: 0 12px 0 25px; justify-content: space-between; font-weight: 700; color: #fff; background: #3b4453; clip-path: polygon(12px 0, 100% 0, calc(100% - 12px) 100%, 0 100%); gap: 0; }
  .add { padding: 0 12px; }
  .docs .add { padding-left: 15px; }

  .work { flex: 1; min-height: 0; display: flex; border: solid #3b4453; border-width: 5px 3px 5px 0; margin-left: 4px; }
  .palette { width: 426px; flex: none; background: #3b4453; display: flex; flex-direction: column; padding: 2px 5px 20px 0; box-sizing: border-box; min-height: 0; }
  h2 { margin: 0; flex: none; height: 27px; display: flex; align-items: center; gap: 6px; padding-left: 9px; border-radius: 5px 5px 0 0; background: #2e3440; font: inherit; }
  .picker { flex: none; display: flex; align-items: center; padding: 16px 13px 5px 21px; gap: 9px; }
  .scroller { flex: 1; min-height: 0; display: flex; padding: 0 14px 0 5px; gap: 9px; overflow: hidden; }
  .thumb { width: 7px; flex: none; height: 85%; border-radius: 3px; background: #535f73; }
  .sections { flex: 1; overflow: hidden; }
  h3 { margin: 0; height: 27px; display: flex; align-items: center; justify-content: space-between; padding: 0 10px 0 9px; background: #2e3440; font: inherit; font-weight: 700; color: #fff; }
  table { border-collapse: separate; border-spacing: 0; width: calc(100% - 21px); margin: 0 0 4px 21px; border-left: 1px solid #2e3542; table-layout: fixed; }
  th, td { box-sizing: border-box; height: 26px; padding: 0; border: solid #2e3542; border-width: 0 1px 1px 0; font-weight: 400; text-align: left; white-space: nowrap; line-height: 20px; }
  th { width: 166px; padding-left: 9px; color: #d0d3d8; }
  .val { display: flex; align-items: center; padding-left: 3px; gap: 6px; height: 25px; }
  .dim { color: #8d939e; }

  .canvas { position: relative; flex: 1; min-width: 0; background: #212830; overflow: hidden; }
  .drawing { position: absolute; inset: 0; width: 100%; height: 100%; }
  .digits { font: 63px "Open Sans", sans-serif; fill: #2c5ab8; stroke: #2b4c91; stroke-width: 2px; }
  .viewlabel { position: absolute; left: 3px; top: 6px; }
  .viewctl { position: absolute; right: 15px; top: 10px; display: flex; gap: 10px; }
  .cube { position: absolute; right: 23px; top: 47px; display: flex; flex-direction: column; align-items: center; gap: 23px; }
  .cube svg { overflow: visible; }
  .compass { font: 700 24px "Liberation Sans", sans-serif; fill: #a9acb0; }
  .top { font: 700 14px "Open Sans", sans-serif; fill: #4c535b; }
  .wcs { width: 57px; height: 21px; border-radius: 5px; background: #8d92a3; color: #62677a; font: 14px/20px "Liberation Sans", sans-serif; justify-content: center; gap: 6px; border: 1px solid #a0a5b4; box-sizing: border-box; }
  .navbar { position: absolute; right: 7px; top: 272px; border-radius: 4px; background: #5a6062; box-shadow: 0 0 3px #14181e; }
  .command { position: absolute; left: 332px; right: 336px; bottom: 0; height: 32px; display: flex; border-radius: 3px; background: #bdbfc1; overflow: hidden; }
  .grab { width: 72px; display: flex; align-items: center; background: #2b303c; gap: 8px; padding-left: 5px; box-sizing: border-box; }
  .grab button:last-child { margin-left: 6px; }
  .recent { gap: 2px; padding: 0 9px 0 5px; }
  .command input { flex: 1; min-width: 0; border: 0; padding: 0; background: none; font: italic 15px/20px "DejaVu Sans Mono", monospace; color: #333; }
  .command input::placeholder { color: #66686b; opacity: 1; }
  .history { padding-right: 6px; }

  .status { height: 40px; flex: none; display: flex; align-items: flex-start; padding-left: 4px; overflow: hidden; }
  .status > button, .status > .slash { margin-top: 5px; }
  .status > button { height: 22px; }
  .status > .burger { width: 51px; }
  .status > .model { margin-top: 0; height: 30px; width: 86px; justify-content: center; font-weight: 700; color: #fff; background: #3b4453; clip-path: polygon(12px 0, 100% 0, calc(100% - 12px) 100%, 0 100%); }
  .status > .layout { width: 71px; padding-left: 9px; box-sizing: border-box; }
  .status > .two { width: 74px; padding-left: 12px; }
  .cells { margin-left: auto; display: flex; gap: 3px; padding-top: 2px; }
  .cell { height: 30px; background: #3b4453; display: flex; }
  .cell button { width: 30px; height: 30px; justify-content: center; }
  .cell .c { width: 20px; }
  .cell .edge { width: 21px; border-right: 1px solid #262d38; box-sizing: border-box; }
  .cell .on { background: #5c8cc2; }
  .cell .mode { width: 59px; }
  .cell .ratio { width: 42px; gap: 5px; }
  .sliver { width: 4px; }
  .cutoff { width: 8px; overflow: hidden; }
  .cutoff button { justify-content: flex-start; padding-left: 5px; }

  .dock { width: 27px; flex: none; margin-top: 20px; background: #2e3440; border-radius: 4px 4px 0 0; display: flex; flex-direction: column; align-items: center; padding: 8px 0 2px; box-sizing: border-box; gap: 13px; }
  .small :global(svg) { width: 14px; height: 14px; }
  .vert { margin-top: auto; writing-mode: vertical-rl; transform: rotate(180deg); color: #c4c7cc; font-size: 15px; line-height: 20px; white-space: nowrap; }
  .lp :global(svg) { width: 20px; height: 20px; }
</style>
